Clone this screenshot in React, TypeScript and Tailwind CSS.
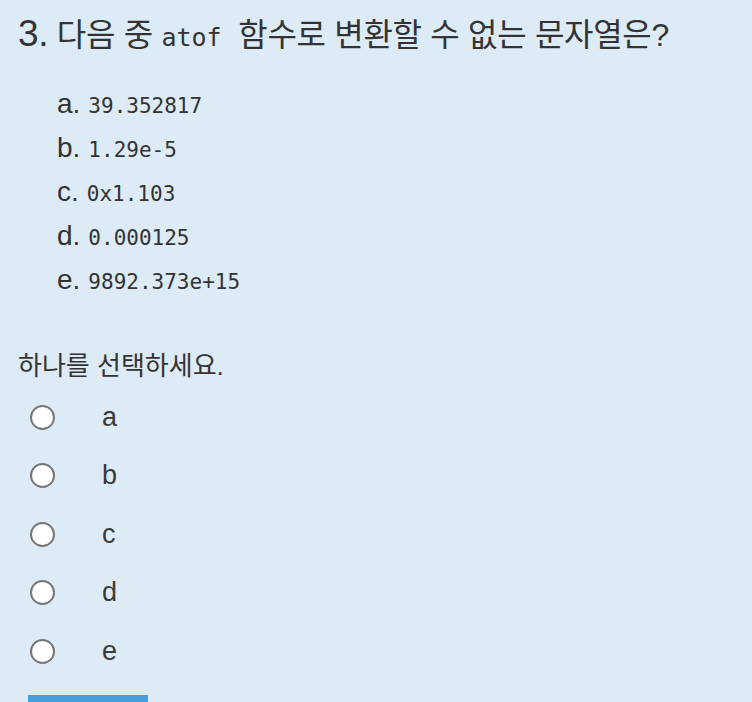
const options = [
  { key: "a", value: "39.352817" },
  { key: "b", value: "1.29e-5" },
  { key: "c", value: "0x1.103" },
  { key: "d", value: "0.000125" },
  { key: "e", value: "9892.373e+15" },
];

function Radio({ label }: { label: string }) {
  return (
    <label className="flex h-[58.5px] items-center">
      <span className="ml-[30px] h-[25px] w-[25px] rounded-full border-2 border-[#767676] bg-white" />
      <span className="ml-[47px] text-[27px] leading-none text-[#3a3a3a]">{label}</span>
    </label>
  );
}

export default function App() {
  return (
    <div className="h-[702px] overflow-hidden bg-[#ddebf7] font-['Liberation_Sans','Noto_Sans_CJK_KR',sans-serif] text-[#333]">
      <h1 className="pl-[18px] pt-[12px] text-[32px] leading-[44px] tracking-[-0.3px]">
        <span className="text-[37px]">3.</span> 다음 중{" "}
        <code className="mr-[8px] font-['DejaVu_Sans_Mono',monospace] text-[25px] tracking-normal">atof</code> 함수로 변환할 수 없는 문자열은?
      </h1>

      <ul className="mt-[24px] pl-[57px]">
        {options.map((o) => (
          <li key={o.key} className="flex h-[44px] items-baseline text-[28px] leading-[40px]">
            <span>{o.key}.</span>
            <span className="ml-[8px] font-['DejaVu_Sans_Mono',monospace] text-[21px]">{o.value}</span>
          </li>
        ))}
      </ul>

      <p className="mt-[46px] pl-[18px] text-[26px] leading-[32px]">하나를 선택하세요.</p>

      <div className="mt-[6px]">
        {options.map((o) => (
          <Radio key={o.key} label={o.key} />
        ))}
      </div>

      <div className="ml-[28px] mt-[14px] h-[30px] w-[120px] bg-[#459ee0]" />
    </div>
  );
}
